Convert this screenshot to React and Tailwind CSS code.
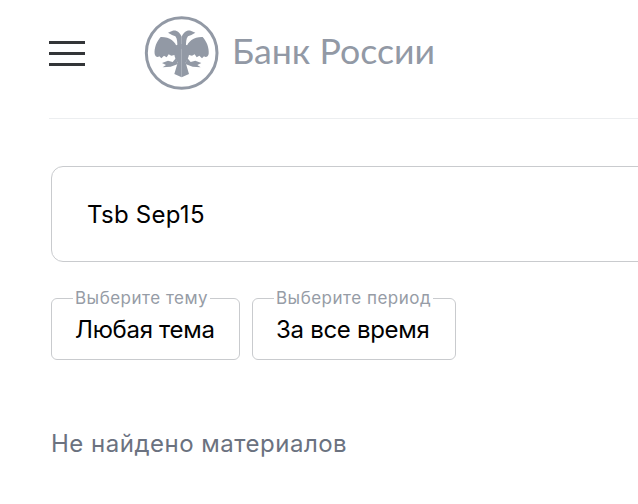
const Half = () => (
  <>
    <path d="M125 112 L125 74 C120 62 110 53 98 56 L84 62 L96 69 L106 73 C112 80 112 92 112 104 Z" />
    <path d="M112 108 C106 88 88 74 62 75 C50 88 42 108 44 126 C46 134 52 137 58 133 L64 139 L72 131 L80 136 L86 127 L94 131 L106 128 Z" />
    <path d="M125 96 L108 100 L102 124 C104 138 110 146 113 152 L103 186 L125 196 Z" />
    <path d="M108 138 L98 150 L84 146 L66 153 L78 159 L68 166 L92 164 L114 156 Z" />
  </>
);

const Emblem = () => (
  <svg width="84" height="84" viewBox="0 0 252 252" className="block shrink-0">
    <circle cx="125" cy="123" r="106" fill="none" stroke="#9299a5" strokeWidth="9" />
    <g fill="#9299a5">
      <Half />
      <g transform="translate(250,0) scale(-1,1)">
        <Half />
      </g>
    </g>
  </svg>
);

const Select = ({ label, value, className, valueClass }) => (
  <fieldset className={`h-[72px] rounded-[6px] border border-[#c9cbce] ${className}`}>
    <legend className="ml-[21px] px-[2px] text-[17px] leading-[20px] tracking-[0.5px] text-[#969ca6]">{label}</legend>
    <div className={`mt-[8px] pl-[23px] text-[24px] leading-[28px] text-black ${valueClass}`}>{value}</div>
  </fieldset>
);

export default function App() {
  return (
    <div className="h-[504px] w-[638px] overflow-hidden bg-white font-['Inter',sans-serif]">
      <header className="ml-[49px] flex h-[119px] w-[640px] items-start border-b border-[#eceef0]">
        <div className="mt-[41px] flex w-[36px] flex-col gap-[8px]">
          <span className="h-[3px] bg-[#333538]" />
          <span className="h-[3px] bg-[#333538]" />
          <span className="h-[3px] bg-[#333538]" />
        </div>
        <div className="ml-[55px] mt-[12px] flex items-center">
          <Emblem />
          <span className="ml-[8px] mt-[-7px] font-['Lato',sans-serif] text-[35.7px] leading-[42px] text-[#9299a5]">Банк России</span>
        </div>
      </header>
      <main className="pl-[51px] pt-[47px]">
        <div className="flex h-[96px] w-[640px] items-center rounded-[12px] border border-[#c9cbce] pl-[35px] pt-[2px] text-[24px] tracking-[0.25px] text-black">Tsb Sep15</div>
        <div className="mt-[26px] flex gap-[12px]">
          <Select label="Выберите тему" value="Любая тема" className="w-[189px]" valueClass="tracking-[-0.3px]" />
          <Select label="Выберите период" value="За все время" className="w-[204px]" valueClass="tracking-[-0.3px]" />
        </div>
        <p className="mt-[70px] text-[24px] leading-[28px] tracking-[0.5px] text-[#6b7280]">Не найдено материалов</p>
      </main>
    </div>
  );
}
